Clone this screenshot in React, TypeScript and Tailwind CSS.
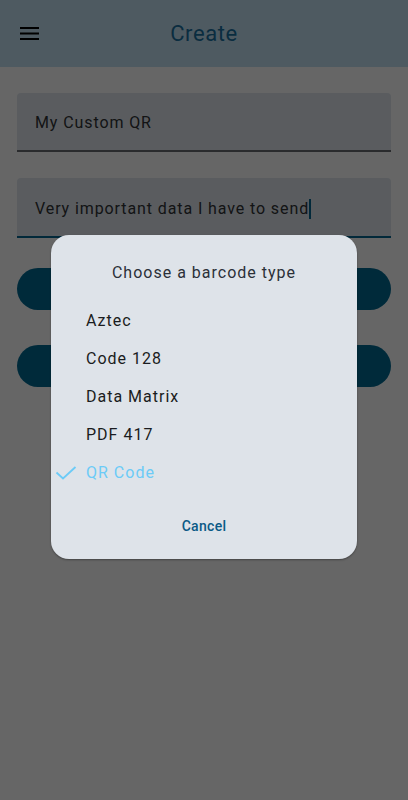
import React from "react";

const types = ["Aztec", "Code 128", "Data Matrix", "PDF 417", "QR Code"];

export default function App() {
  const selected = "QR Code";

  return (
    <div className="relative h-[800px] w-[408px] overflow-hidden bg-white font-['Roboto',sans-serif]">
      {/* App bar */}
      <header className="flex h-[67px] items-center bg-[#c2e2f3] px-5">
        <svg width="20" height="14" viewBox="0 0 20 14" className="shrink-0">
          <path d="M0 1h19M0 6.5h19M0 12h19" stroke="#000" strokeWidth="2" />
        </svg>
        <h1 className="flex-1 text-center text-[22px] tracking-[0.6px] text-[#1b70a0]">Create</h1>
        <span className="w-5 shrink-0" />
      </header>

      <main className="flex flex-col px-[17px] pt-[26px]">
        <div className="flex h-[59px] items-center rounded-t-[4px] border-b-2 border-[#6a6d71] bg-[#e0e7ee] px-[18px] pt-[3px]">
          <span className="text-[16px] tracking-[0.9px] text-[#303336]">My Custom QR</span>
        </div>

        <div className="mt-[26px] flex h-[60px] items-center rounded-t-[4px] border-b-2 border-[#066791] bg-[#e0e7ee] px-[18px] pt-[3px]">
          <span className="text-[16px] tracking-[0.9px] text-[#303336]">Very important data I have to send</span>
          <span className="h-[20px] w-[2px] bg-[#066791]" />
        </div>

        <button className="mt-[30px] h-[42px] rounded-full bg-[#006992]" />
        <button className="mt-[35px] h-[42px] rounded-full bg-[#006992]" />
      </main>

      {/* Scrim */}
      <div className="absolute inset-0 bg-black/60" />

      {/* Dialog */}
      <div className="absolute left-[51px] top-[235px] w-[306px] rounded-[18px] bg-[#dee3e9] pb-[18px] pt-[26px] shadow-[0_1px_2px_rgba(0,0,0,0.35)]">
        <p className="text-center text-[16px] tracking-[1px] text-[#2b3038]">Choose a barcode type</p>

        <ul className="mt-[17px] flex flex-col">
          {types.map((t) => {
            const isSel = t === selected;
            return (
              <li key={t} className="flex h-[38px] items-center">
                <span className="flex w-[35px] pl-[4px]">
                  {isSel && (
                    <svg width="22" height="14" viewBox="0 0 22 14">
                      <path d="M1.5 6.5L8 12.5L20.5 1" fill="none" stroke="#6ccbf7" strokeWidth="1.8" />
                    </svg>
                  )}
                </span>
                <span
                  className={`text-[16px] tracking-[1px] ${
                    isSel ? "text-[#6ccbf7]" : "text-[#1a1c20]"
                  }`}
                >
                  {t}
                </span>
              </li>
            );
          })}
        </ul>

        <div className="mt-[20px] flex justify-center">
          <button className="px-3 py-1 text-[14px] font-medium tracking-[0.3px] text-[#0b5a86]">Cancel</button>
        </div>
      </div>
    </div>
  );
}
